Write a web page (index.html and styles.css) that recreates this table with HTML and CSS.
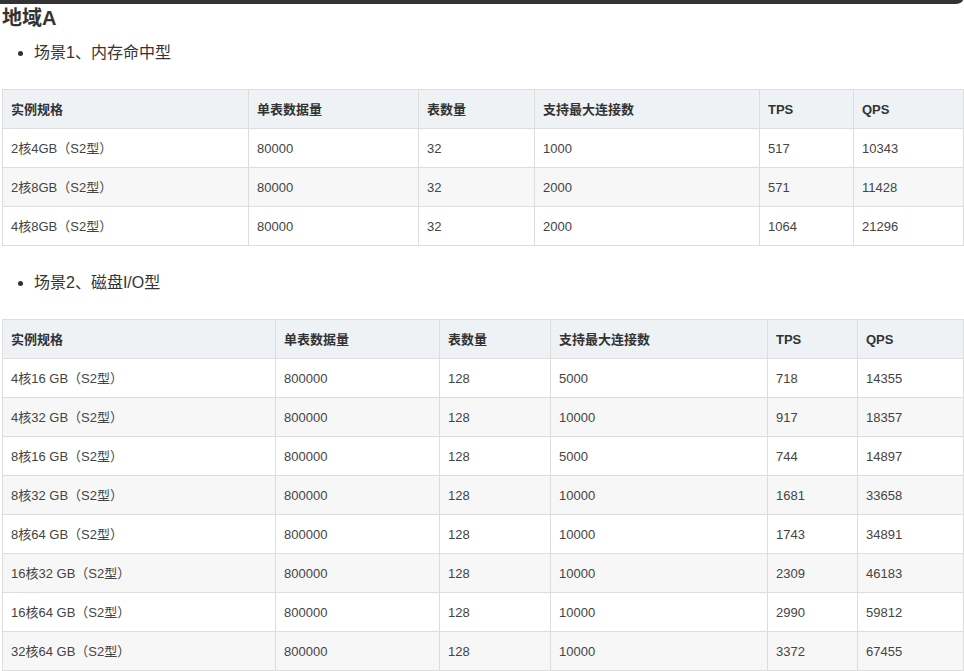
FILE: index.html
```html
<!DOCTYPE html>
<html lang="zh-CN">
<head>
<meta charset="utf-8">
<title>地域A</title>
<link rel="stylesheet" href="styles.css">
</head>
<body>
<div class="topbar"></div>
<main class="doc">
  <h3 class="title">地域A</h3>
  <ul class="list"><li>场景1、内存命中型</li></ul>
  <table class="grid">
    <colgroup><col class="a1"><col class="a2"><col class="a3"><col class="a4"><col class="a5"><col class="a6"></colgroup>
    <thead><tr><th>实例规格</th><th>单表数据量</th><th>表数量</th><th>支持最大连接数</th><th>TPS</th><th>QPS</th></tr></thead>
    <tbody>
      <tr><td>2核4GB（S2型）</td><td>80000</td><td>32</td><td>1000</td><td>517</td><td>10343</td></tr>
      <tr><td>2核8GB（S2型）</td><td>80000</td><td>32</td><td>2000</td><td>571</td><td>11428</td></tr>
      <tr><td>4核8GB（S2型）</td><td>80000</td><td>32</td><td>2000</td><td>1064</td><td>21296</td></tr>
    </tbody>
  </table>
  <ul class="list"><li>场景2、磁盘I/O型</li></ul>
  <table class="grid">
    <colgroup><col class="b1"><col class="b2"><col class="b3"><col class="b4"><col class="b5"><col class="b6"></colgroup>
    <thead><tr><th>实例规格</th><th>单表数据量</th><th>表数量</th><th>支持最大连接数</th><th>TPS</th><th>QPS</th></tr></thead>
    <tbody>
      <tr><td>4核16 GB（S2型）</td><td>800000</td><td>128</td><td>5000</td><td>718</td><td>14355</td></tr>
      <tr><td>4核32 GB（S2型）</td><td>800000</td><td>128</td><td>10000</td><td>917</td><td>18357</td></tr>
      <tr><td>8核16 GB（S2型）</td><td>800000</td><td>128</td><td>5000</td><td>744</td><td>14897</td></tr>
      <tr><td>8核32 GB（S2型）</td><td>800000</td><td>128</td><td>10000</td><td>1681</td><td>33658</td></tr>
      <tr><td>8核64 GB（S2型）</td><td>800000</td><td>128</td><td>10000</td><td>1743</td><td>34891</td></tr>
      <tr><td>16核32 GB（S2型）</td><td>800000</td><td>128</td><td>10000</td><td>2309</td><td>46183</td></tr>
      <tr><td>16核64 GB（S2型）</td><td>800000</td><td>128</td><td>10000</td><td>2990</td><td>59812</td></tr>
      <tr><td>32核64 GB（S2型）</td><td>800000</td><td>128</td><td>10000</td><td>3372</td><td>67455</td></tr>
    </tbody>
  </table>
</main>
</body>
</html>
```
FILE: styles.css
```css
html, body {
  margin: 0;
  padding: 0;
  background: #fff;
  overflow: hidden;
}
body {
  font-family: "Liberation Sans", Arial, "Noto Sans CJK SC", sans-serif;
  color: #333;
}
.topbar {
  height: 4px;
  width: 963px;
  background: #333;
  border-bottom-right-radius: 8px 4px;
}
.doc {
  padding-left: 2px;
}
.title {
  margin: 0;
  font-size: 20px;
  line-height: 28px;
  font-weight: bold;
  color: #333;
}
.list {
  margin: 9px 0 24px;
  padding-left: 32px;
  font-size: 16px;
  line-height: 24px;
  color: #333;
}
.grid {
  width: 962px;
  table-layout: fixed;
  border-collapse: collapse;
  font-size: 13px;
  line-height: 20px;
}
.grid + .list {
  margin-top: 25px;
  margin-bottom: 24px;
}
.grid th, .grid td {
  border: 1px solid #dddddd;
  padding: 10px 8px 8px;
  text-align: left;
  white-space: nowrap;
  overflow: hidden;
}
.grid th {
  background: #eff2f5;
  font-weight: bold;
  color: #333;
}
.grid td {
  color: #444;
}
.grid tbody tr:nth-child(even) td {
  background: #f7f7f7;
}
.a1 { width: 246px; }
.a2 { width: 170px; }
.a3 { width: 116px; }
.a4 { width: 225px; }
.a5 { width: 94px; }
.a6 { width: 110px; }
.b1 { width: 273px; }
.b2 { width: 164px; }
.b3 { width: 111px; }
.b4 { width: 217px; }
.b5 { width: 90px; }
.b6 { width: 106px; }
```
